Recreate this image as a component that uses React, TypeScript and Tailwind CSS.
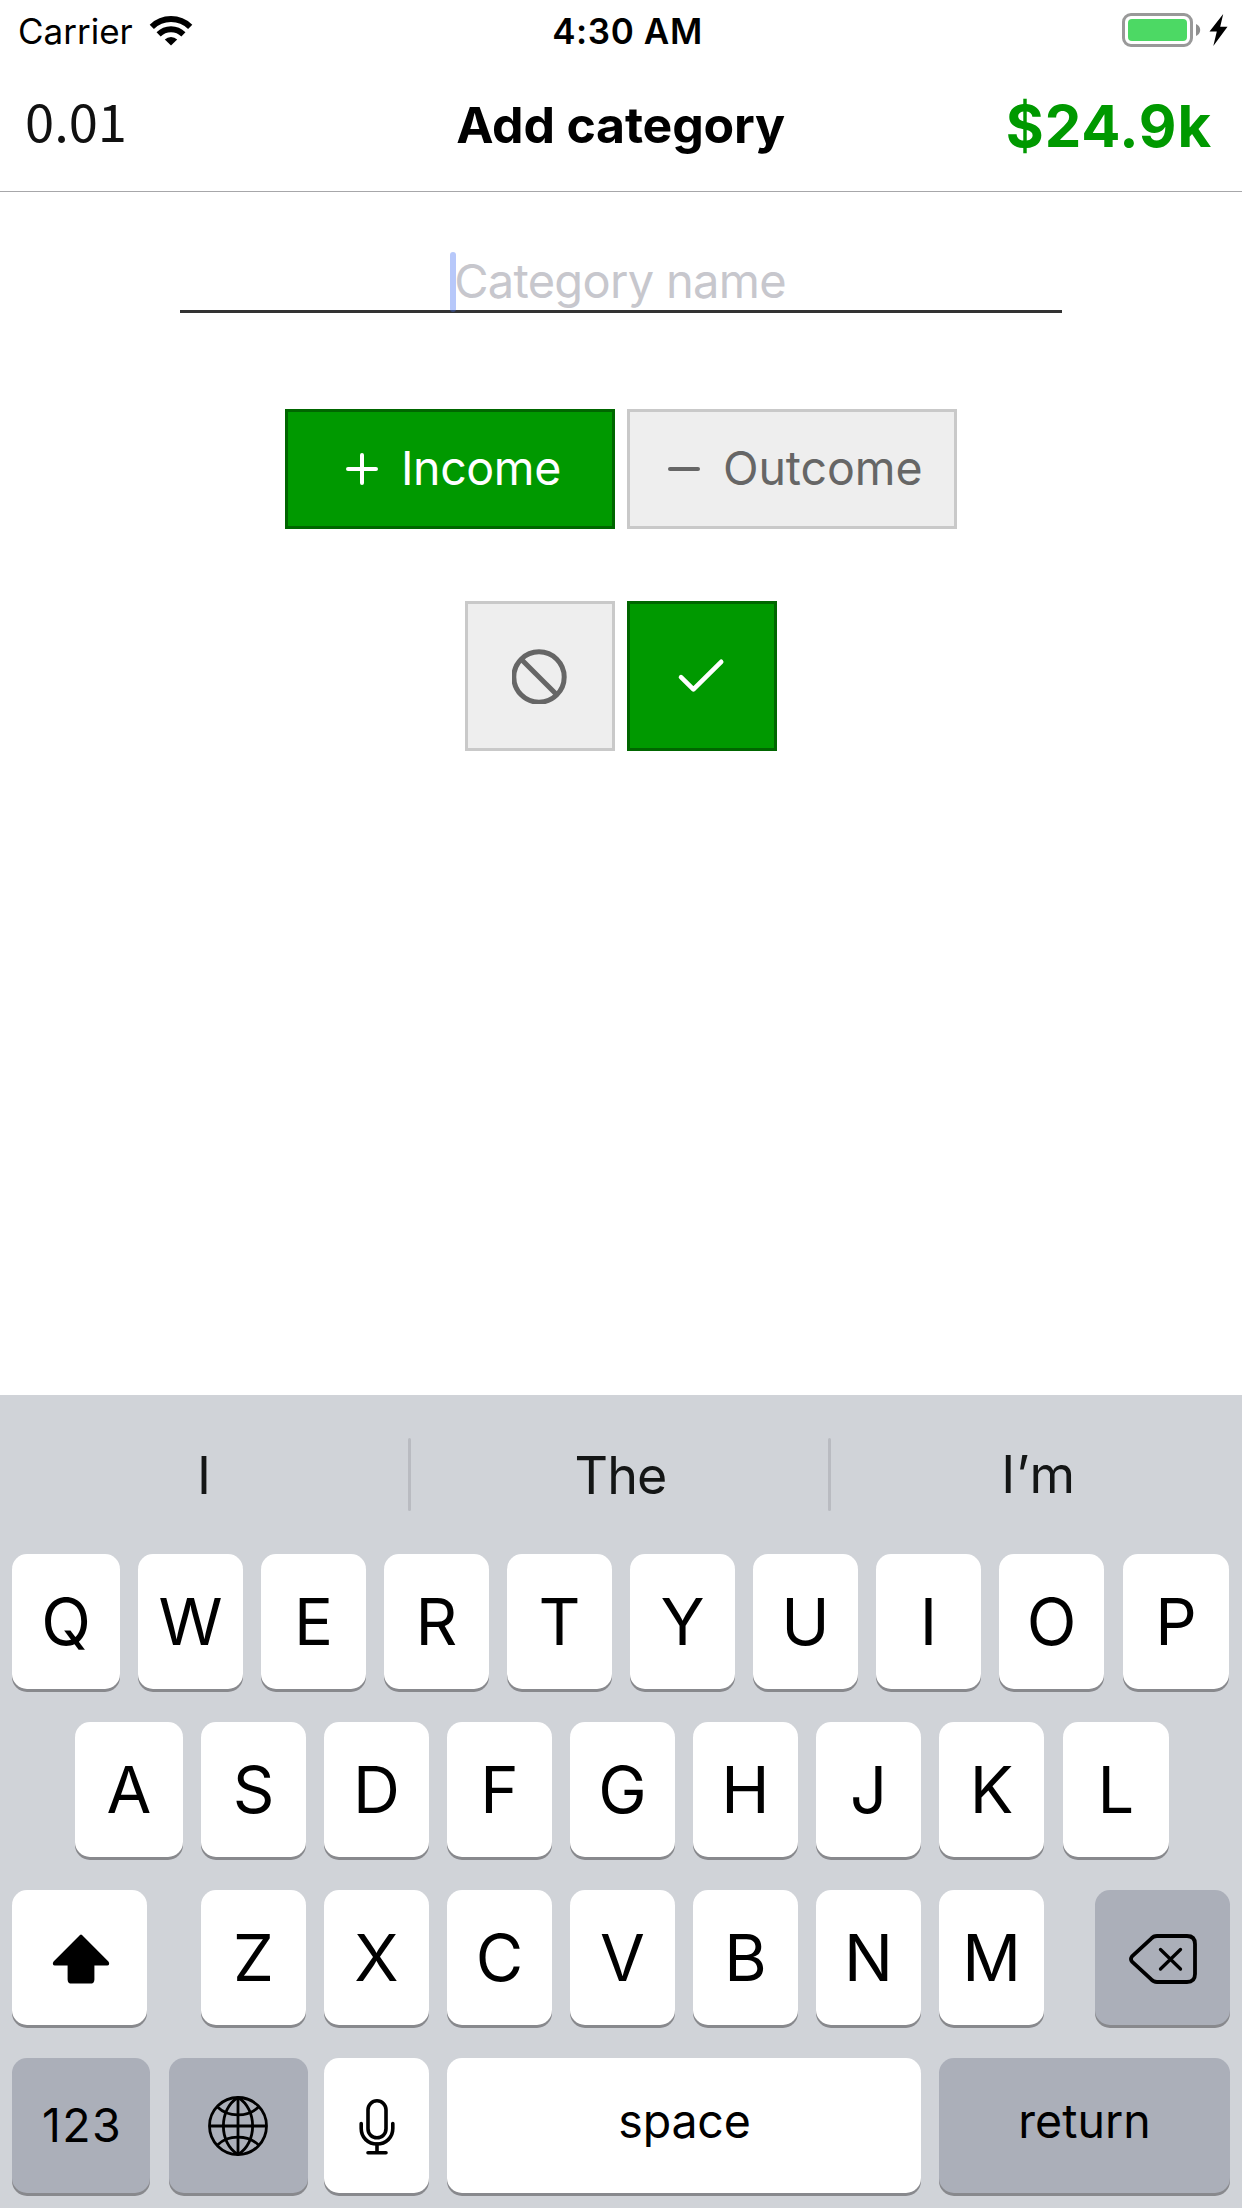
import React from "react";
import { clsx } from "clsx";

function WifiIcon() {
  return (
    <svg className="block h-[31px] w-[44px]" viewBox="0 0 44 31" fill="none" stroke="#000">
      <path d="M2.800 11.800A27.500 27.500 0 0 1 41.200 11.800" strokeWidth="6" />
      <path d="M9.600 19.400A17.500 17.500 0 0 1 34.400 19.400" strokeWidth="5.800" />
      <path d="M15.800 24.600A8.800 8.800 0 0 1 28.200 24.600L22 30.600Z" fill="#000" stroke="none" />
    </svg>
  );
}

function Battery() {
  return (
    <div className="flex items-center">
      <div className="h-[34px] w-[71px] rounded-[9px] border-[3px] border-[#999] p-[3px]">
        <div className="h-full w-[59px] rounded-[4px] bg-[#4cd964]" />
      </div>
      <svg className="ml-[3px] block h-[12px] w-[5px]" viewBox="0 0 5 12" fill="#8f8f8f">
        <path d="M0 0C2.400 1 4.200 3.200 4.200 6C4.200 8.800 2.400 11 0 12Z" />
      </svg>
      <svg className="ml-[8px] block h-[32px] w-[19px]" viewBox="0 0 19 32">
        <path d="M14.200 0L0.500 17.400H7.800L4.300 32L18.500 12.800H11.200Z" fill="#000" />
      </svg>
    </div>
  );
}

function ShiftIcon() {
  return (
    <svg className="mt-[2px] ml-[3px] block h-[50px] w-[58px]" viewBox="0 0 58 50">
      <path d="M28 0.900Q29 0 30 0.900L56.400 27.600Q57.600 29 57 30.600Q56.600 31.600 55.200 31.600H42.400V45.400Q42.400 49.600 38.200 49.600H19.800Q15.600 49.600 15.600 45.400V31.600H2.800Q1.400 31.600 1 30.600Q0.400 29 1.600 27.600Z" fill="#000" />
    </svg>
  );
}

function DeleteIcon() {
  return (
    <svg className="mt-[2px] block h-[50px] w-[68px]" viewBox="0 0 68 50" fill="none" stroke="#000" strokeWidth="3.800" strokeLinecap="round" strokeLinejoin="round">
      <path d="M28 2H58Q66 2 66 10V40Q66 48 58 48H28Q24.500 48 22 45.200L3 27.600Q1 25 3 22.400L22 4.800Q24.500 2 28 2Z" />
      <path d="M31.500 15.500L51.500 35M51.500 15.500L31.500 35" strokeWidth="3.300" />
    </svg>
  );
}

function GlobeIcon() {
  return (
    <svg className="mr-[2px] block h-[60px] w-[60px]" viewBox="0 0 60 60" fill="none" stroke="#000" strokeWidth="2.800">
      <circle cx="30" cy="30" r="28.500" />
      <path d="M30 1.500V58.500M1.500 30H58.500" />
      <path d="M30 1.500C10.500 13 10.500 47 30 58.500C49.500 47 49.500 13 30 1.500Z" />
      <path d="M9.500 11C20 21.500 40 21.500 50.500 11M9.500 49C20 38.500 40 38.500 50.500 49" />
    </svg>
  );
}

function MicIcon() {
  return (
    <svg className="mt-[3px] ml-px block h-[56px] w-[36px]" viewBox="0 0 36 56" fill="none" stroke="#000" strokeWidth="3.600" strokeLinecap="round">
      <rect x="9" y="1.800" width="18" height="37" rx="9" />
      <path d="M2.200 24.500V29.500C2.200 38.500 9 45 18 45C27 45 33.800 38.500 33.800 29.500V24.500" />
      <path d="M18 45V53M9 53.800H27" />
    </svg>
  );
}

function Key({ children, width = "w-[105px]", dark = false, className = "" }: { children: React.ReactNode; width?: string; dark?: boolean; className?: string }) {
  return (
    <button
      className={clsx(
        "flex h-[135px] shrink-0 items-center justify-center rounded-[15px] text-[65px] leading-none text-black shadow-[0_3px_0_#88898d]",
        dark ? "bg-[#abafb9]" : "bg-white",
        width,
        className,
      )}
    >
      {children}
    </button>
  );
}

const letters = (row: string) => row.split("").map((l) => <Key key={l}>{l}</Key>);

export default function App() {
  return (
    <div className="flex h-[2208px] w-[1242px] flex-col overflow-hidden bg-white font-['Inter','Liberation_Sans',sans-serif] whitespace-nowrap text-black">
      <div className="grid h-[60px] shrink-0 grid-cols-[1fr_auto_1fr] items-center pr-[14px] pl-[18px] text-[35px] leading-none">
        <div className="flex items-center gap-[16px]">
          <span className="pt-[2px]">Carrier</span>
          <WifiIcon />
        </div>
        <div className="pt-[2px] pl-[9px] font-semibold tracking-[0.6px]">4:30 AM</div>
        <div className="flex justify-end">
          <Battery />
        </div>
      </div>

      <div className="grid h-[132px] shrink-0 grid-cols-[1fr_auto_1fr] items-center border-b border-[#a7a7aa] pr-[30px] pl-[25px]">
        <div className="pb-[12px] font-['Noto_Sans_CJK_SC',sans-serif] text-[52.500px] leading-none text-[#111]">0.01</div>
        <h1 className="pb-[2px] pl-[4px] text-[50px] leading-none font-bold tracking-[-0.200px]">Add category</h1>
        <div className="text-right text-[58px] leading-none font-bold tracking-[0.900px] text-[#009900]">$24.9k</div>
      </div>

      <main className="flex flex-1 flex-col items-center">
        <div className="mt-[60px] flex h-[61px] w-[882px] justify-center border-b-[3px] border-[#333] pr-[6px]">
          <span className="z-10 h-[60px] w-[6px] rounded-full bg-[#436ef2]/38" />
          <span className="-ml-[2px] pt-[2px] text-[47px] leading-[54px] tracking-[-0.700px] text-[#c7c7cd]">Category name</span>
        </div>

        <div className="mt-[96px] flex gap-[12px]">
          <button className="flex h-[120px] w-[330px] items-center border-[3px] border-[#006600] bg-[#009900] pl-[58px] text-[46.500px] leading-none text-white">
            <svg className="block h-[32px] w-[32px]" viewBox="0 0 32 32" fill="none" stroke="currentColor" strokeWidth="4" strokeLinecap="round">
              <path d="M16 2V30M2 16H30" />
            </svg>
            <span className="ml-[23px] pb-px tracking-[-0.400px]">Income</span>
          </button>
          <button className="flex h-[120px] w-[330px] items-center border-[3px] border-[#c9c9c9] bg-[#eee] pl-[38px] text-[46.500px] leading-none text-[#666]">
            <svg className="block h-[32px] w-[32px]" viewBox="0 0 32 32" fill="none" stroke="currentColor" strokeWidth="4" strokeLinecap="round">
              <path d="M2 16H30" />
            </svg>
            <span className="ml-[23px] pb-px tracking-[-0.100px]">Outcome</span>
          </button>
        </div>

        <div className="mt-[72px] flex gap-[12px]">
          <button className="flex size-[150px] items-center justify-center border-[3px] border-[#c9c9c9] bg-[#eee] text-[#666]">
            <svg className="block size-[56px]" viewBox="0 0 56 56" fill="none" stroke="currentColor" strokeWidth="5">
              <circle cx="27" cy="29" r="25.200" />
              <path d="M9.200 11.200L44.800 46.800" />
            </svg>
          </button>
          <button className="flex size-[150px] items-center justify-center border-[3px] border-[#006600] bg-[#009900] text-white">
            <svg className="block size-[56px]" viewBox="0 0 56 56" fill="none" stroke="currentColor" strokeWidth="4.600" strokeLinecap="round" strokeLinejoin="round">
              <path d="M7 29.200L19.400 41.400L47.200 13.800" />
            </svg>
          </button>
        </div>
      </main>

      <div className="h-[813px] shrink-0 bg-[#d0d3d8]">
        <div className="grid h-[159px] grid-cols-[408px_3px_417px_3px_411px] items-center text-[52px] leading-none text-[#141616]">
          <span className="pt-[3px] text-center">I</span>
          <span className="h-[73px] rounded-full bg-[#b9bbc1]" />
          <span className="pt-[3px] pl-[2px] text-center tracking-[-0.900px]">The</span>
          <span className="h-[73px] rounded-full bg-[#b9bbc1]" />
          <span className="pt-px pl-[4px] text-center tracking-[0.900px]">I’m</span>
        </div>

        <div className="flex flex-col gap-[33px]">
          <div className="flex gap-[18px] pl-[12px]">
            <Key width="w-[108px]">Q</Key>
            {letters("WERTYUIO")}
            <Key width="w-[106px]" className="ml-px">P</Key>
          </div>
          <div className="flex gap-[18px] pl-[75px]">
            <Key width="w-[108px]">A</Key>
            {letters("SDFGHJK")}
            <Key width="w-[106px]" className="ml-px">L</Key>
          </div>
          <div className="flex gap-[18px] pl-[12px]">
            <Key width="w-[135px]" className="mr-[36px]"><ShiftIcon /></Key>
            {letters("ZXCVBNM")}
            <Key width="w-[135px]" dark className="ml-[33px]"><DeleteIcon /></Key>
          </div>
          <div className="flex pl-[12px]">
            <Key width="w-[138px]" dark><span className="pl-[2px] text-[46.500px] tracking-[1.400px]">123</span></Key>
            <Key width="w-[139px]" dark className="ml-[19px]"><GlobeIcon /></Key>
            <Key className="ml-[16px]"><MicIcon /></Key>
            <Key width="w-[474px]" className="ml-[18px]"><span className="pb-[8px] pl-px text-[46.500px] tracking-[-0.200px]">space</span></Key>
            <Key width="w-[291px]" dark className="ml-[18px]"><span className="pb-[8px] text-[46.500px]">return</span></Key>
          </div>
        </div>
      </div>
    </div>
  );
}
